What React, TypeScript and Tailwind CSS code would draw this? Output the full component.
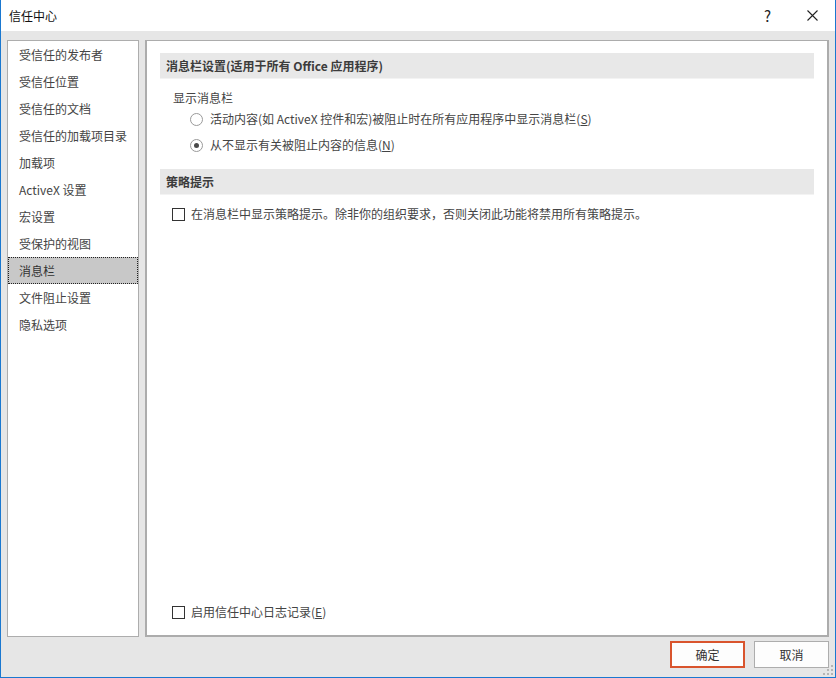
import React from "react";

const menuItems = [
  "受信任的发布者",
  "受信任位置",
  "受信任的文档",
  "受信任的加载项目录",
  "加载项",
  "ActiveX 设置",
  "宏设置",
  "受保护的视图",
  "消息栏",
  "文件阻止设置",
  "隐私选项",
];

function Radio({ checked }: { checked?: boolean }) {
  return (
    <span className="w-[13px] h-[13px] rounded-full border border-[#9a9a9a] bg-white flex items-center justify-center shrink-0">
      {checked && <span className="w-[5px] h-[5px] rounded-full bg-[#4a4a4a]" />}
    </span>
  );
}

function Checkbox() {
  return <span className="w-[13px] h-[13px] border border-[#333] bg-white shrink-0" />;
}

function SectionHeader({ children }: { children: React.ReactNode }) {
  return (
    <div className="h-[26px] bg-[#e8e8e8] border-b border-[#f3f3f3] flex items-center pl-[6px] font-bold text-[#3c3c3c]">
      {children}
    </div>
  );
}

export default function App() {
  return (
    <div
      className="relative w-[836px] h-[678px] flex flex-col bg-[#e6e6e6] border-x border-b border-[#1a78d0] text-[12px] text-[#444] overflow-hidden"
      style={{ fontFamily: '"Noto Sans CJK SC", "Noto Sans", sans-serif' }}
    >
      {/* title bar */}
      <div className="h-[31px] bg-white flex items-center justify-between shrink-0">
        <span className="pl-[8px] text-[#111]">信任中心</span>
        <div className="flex items-center">
          <span className="text-[15px] text-[#222] mr-[36px] leading-none">?</span>
          <svg width="11" height="11" viewBox="0 0 11 11" className="mr-[17px]">
            <path d="M0.5 0.5 L10.5 10.5 M10.5 0.5 L0.5 10.5" stroke="#222" strokeWidth="1.1" />
          </svg>
        </div>
      </div>

      {/* body */}
      <div className="flex gap-[6px] px-[6px] pt-[9px] h-[606px] shrink-0">
        {/* left nav */}
        <div className="w-[132px] h-[597px] bg-white border border-[#adadad] flex flex-col">
          {menuItems.map((item) => (
            <div
              key={item}
              className={
                item === "消息栏"
                  ? "h-[27px] flex items-center pl-[10px] bg-[#c8c8c8] border border-dotted border-[#222] text-[#333]"
                  : "h-[27px] flex items-center pl-[11px]"
              }
            >
              {item}
            </div>
          ))}
        </div>

        {/* right content */}
        <div className="w-[684px] h-[597px] bg-white border-x-2 border-b-2 border-t border-[#acacac] flex flex-col px-[13px] pt-[12px] pb-[13px]">
          <SectionHeader>消息栏设置(适用于所有 Office 应用程序)</SectionHeader>
          <div className="h-[20px] mt-[9px] flex items-center pl-[13px]">显示消息栏</div>
          <div className="h-[20px] mt-[1px] flex items-center pl-[30px] gap-[7px]">
            <Radio />
            <span>
              活动内容(如 ActiveX 控件和宏)被阻止时在所有应用程序中显示消息栏(<span className="underline">S</span>)
            </span>
          </div>
          <div className="h-[20px] mt-[6px] flex items-center pl-[30px] gap-[7px]">
            <Radio checked />
            <span>
              从不显示有关被阻止内容的信息(<span className="underline">N</span>)
            </span>
          </div>
          <div className="mt-[14px]">
            <SectionHeader>策略提示</SectionHeader>
          </div>
          <div className="h-[20px] mt-[9px] flex items-center pl-[12px] gap-[6px]">
            <Checkbox />
            <span>在消息栏中显示策略提示。除非你的组织要求，否则关闭此功能将禁用所有策略提示。</span>
          </div>
          <div className="mt-auto h-[20px] flex items-center pl-[12px] gap-[6px]">
            <Checkbox />
            <span>
              启用信任中心日志记录(<span className="underline">E</span>)
            </span>
          </div>
        </div>
      </div>

      {/* footer */}
      <div className="flex justify-end gap-[9px] pr-[6px] pt-[4px]">
        <button className="w-[75px] h-[27px] bg-[#fdfdfd] border-2 border-[#d9542d] text-[#333]">确定</button>
        <button className="w-[75px] h-[27px] bg-[#fdfdfd] border border-[#adadad] text-[#333]">取消</button>
      </div>

      {/* resize grip */}
      <svg width="10" height="10" viewBox="0 0 10 10" className="absolute right-[2px] bottom-[2px]">
        <rect x="8" y="0" width="2" height="2" fill="#b5b5b5" />
        <rect x="4" y="4" width="2" height="2" fill="#b5b5b5" />
        <rect x="8" y="4" width="2" height="2" fill="#b5b5b5" />
        <rect x="0" y="8" width="2" height="2" fill="#b5b5b5" />
        <rect x="4" y="8" width="2" height="2" fill="#b5b5b5" />
        <rect x="8" y="8" width="2" height="2" fill="#b5b5b5" />
      </svg>
    </div>
  );
}
